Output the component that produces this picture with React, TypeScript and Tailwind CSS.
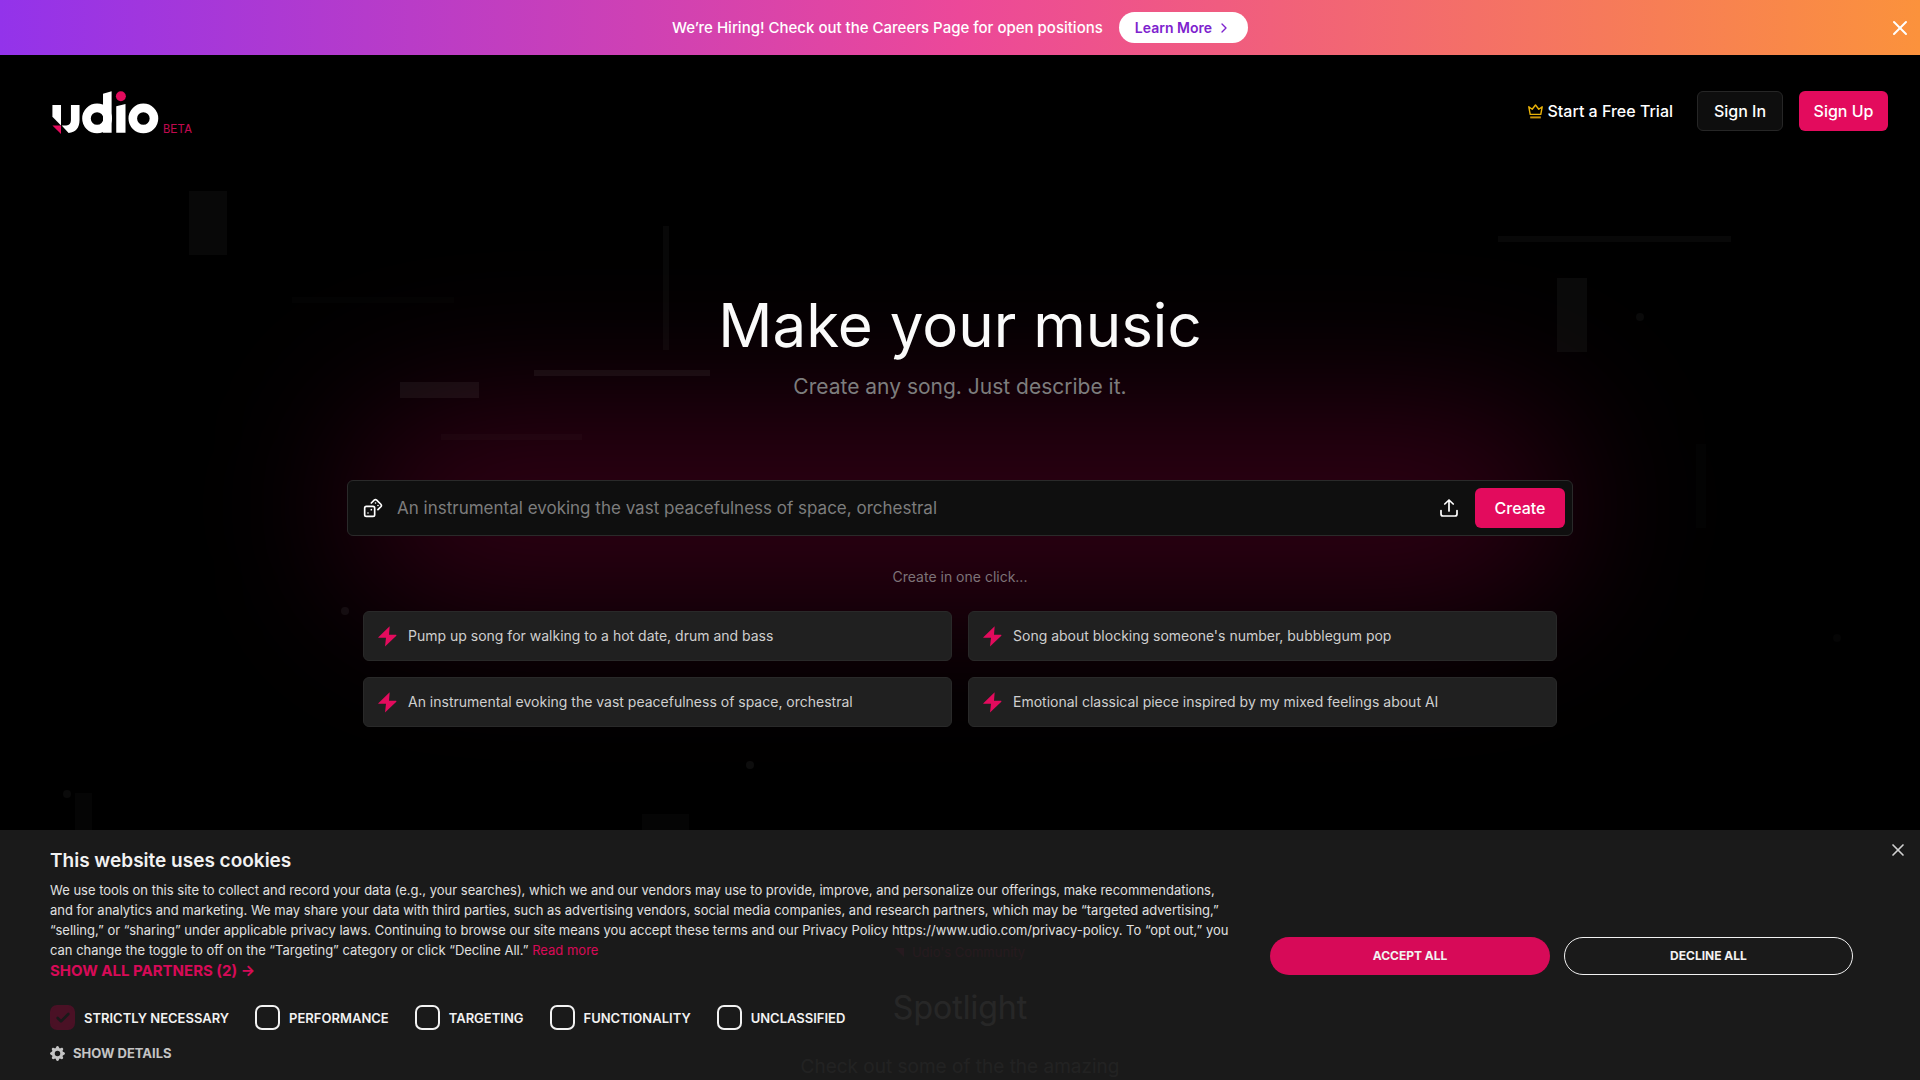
import React, { useState } from 'react';
import { Check, ChevronRight, Dices, X } from 'lucide-react';
import { BsGearFill } from 'react-icons/bs';

const prompts = [
  'Pump up song for walking to a hot date, drum and bass',
  "Song about blocking someone's number, bubblegum pop",
  'An instrumental evoking the vast peacefulness of space, orchestral',
  'Emotional classical piece inspired by my mixed feelings about AI',
];

const cookieGroups = [
  { id: 'necessary', label: 'STRICTLY NECESSARY', locked: true },
  { id: 'performance', label: 'PERFORMANCE' },
  { id: 'targeting', label: 'TARGETING' },
  { id: 'functionality', label: 'FUNCTIONALITY' },
  { id: 'unclassified', label: 'UNCLASSIFIED' },
];

// Faint blocks floating behind the hero
const shapes = [
  'left-[189px] top-[191px] h-16 w-[38px] bg-white/3',
  'left-[292px] top-[297px] h-[6px] w-[162px] bg-white/1',
  'left-[663px] top-[226px] h-[124px] w-[6px] bg-white/3',
  'left-[534px] top-[370px] h-[6px] w-[176px] bg-white/5',
  'left-[400px] top-[382px] h-4 w-[79px] bg-white/5',
  'left-[441px] top-[434px] h-[6px] w-[141px] bg-white/2',
  'left-[1498px] top-[236px] h-[6px] w-[233px] bg-white/3',
  'left-[1557px] top-[278px] h-[74px] w-[30px] bg-white/4',
  'left-[1696px] top-[444px] h-[84px] w-[10px] bg-white/1',
  'left-[75px] top-[793px] h-[80px] w-[17px] bg-white/2',
  'left-[642px] top-[814px] h-[40px] w-[47px] bg-white/2',
  'left-[341px] top-[607px] size-2 rounded-full bg-white/5',
  'left-[746px] top-[761px] size-2 rounded-full bg-white/5',
  'left-[1636px] top-[313px] size-2 rounded-full bg-white/4',
  'left-[1833px] top-[634px] size-2 rounded-full bg-white/2',
  'left-[63px] top-[790px] size-2 rounded-full bg-white/4',
];

const Logo: React.FC = () => (
  <a href="#" className="flex items-end gap-1" aria-label="Udio">
    <svg viewBox="156 272 321 130" className="h-[43px] w-[107px]" aria-hidden="true">
      <g fill="#fff">
        <path d="M156 314H182V376L156 350Z" />
        <path d="M212 314H238V360C238 384 226 398 205 399L184 376H198C207 376 212 370 212 360Z" />
        <path d="M309 280L335 273V398H309Z" />
        <path d="M349 318L377 311V398H349Z" />
      </g>
      <g fill="none" stroke="#fff" strokeWidth="26">
        <circle cx="291" cy="355" r="32" />
        <circle cx="431" cy="355" r="32" />
      </g>
      <path d="M156 376H182V402Z" fill="#e30b5d" />
      <circle cx="363" cy="288" r="15" fill="#e30b5d" />
    </svg>
    <span className="font-['Liberation_Mono',monospace] text-xs leading-2 text-[#c00a4f]">BETA</span>
  </a>
);

const CrownIcon: React.FC = () => (
  <svg viewBox="0 0 15 15" className="size-[15px]" fill="none" aria-hidden="true">
    <path
      d="M0.8 2.8L4.2 5.2L7.5 1L10.8 5.2L14.2 2.8L12.8 10.4H2.2Z"
      stroke="#eab308"
      strokeWidth="1.4"
      strokeLinejoin="round"
    />
    <path d="M2.2 12.4H12.8V14.4H2.2Z" fill="#c8930a" />
  </svg>
);

const BoltIcon: React.FC = () => (
  <svg viewBox="0 0 57 62" className="h-[21px] w-[19px] shrink-0" fill="#e30b5d" aria-hidden="true">
    <path d="M35 0L1 33Q0 35 2 35H24L21 61L55 29Q56 26 54 26H33Z" />
  </svg>
);

const UploadIcon: React.FC = () => (
  <svg
    viewBox="0 0 18 18"
    className="size-[18px]"
    fill="none"
    stroke="#fff"
    strokeWidth="1.7"
    strokeLinecap="round"
    strokeLinejoin="round"
    aria-hidden="true"
  >
    <path d="M9 12V1.2M4.8 5L9 1L13.2 5" />
    <path d="M1 11.5V15Q1 17 3 17H15Q17 17 17 15V11.5" />
  </svg>
);

const HiringBanner: React.FC<{ onClose: () => void }> = ({ onClose }) => (
  <div className="relative flex h-[55px] items-center justify-center gap-4 bg-linear-to-r/srgb from-[#9333ea] via-[#ec4899] to-[#fb923c]">
    <p className="text-[15px] leading-5 font-medium">We’re Hiring! Check out the Careers Page for open positions</p>
    <a
      href="#"
      className="flex h-[31px] items-center gap-1 rounded-full bg-white px-4 text-sm font-semibold text-[#7e22ce]"
    >
      Learn More
      <ChevronRight className="size-4" />
    </a>
    <button type="button" aria-label="Dismiss" onClick={onClose} className="absolute right-2 p-0">
      <X className="size-6" />
    </button>
  </div>
);

const Header: React.FC = () => (
  <header className="flex items-start justify-between pt-9 pr-8 pl-[52px]">
    <Logo />
    <nav className="flex items-center text-base font-medium">
      <a href="#" className="mr-6 flex items-center gap-1">
        <CrownIcon />
        Start a Free Trial
      </a>
      <button type="button" className="mr-4 h-10 w-[86px] rounded-md border border-[#262626] bg-[#0e0e0e]">
        Sign In
      </button>
      <button type="button" className="h-10 w-[89px] rounded-md bg-[#e30b5d]">
        Sign Up
      </button>
    </nav>
  </header>
);

const Hero: React.FC = () => (
  <section className="flex flex-col items-center px-8 pt-[161px] text-center">
    <h1 className="text-[60px] leading-[60px] text-[#fafafa]">Make your music</h1>
    <p className="mt-[18px] text-[21px] leading-7 text-[#7d7d7d]">Create any song. Just describe it.</p>

    <div className="relative mt-[79px] w-full max-w-[1226px]">
      <div className="absolute inset-x-0 -top-[72px] -bottom-[68px] -z-10 rounded-full bg-[#300014] blur-[76px]" />
      <form
        className="relative flex h-14 items-center rounded-md border border-[#2a2a2a] bg-[#0f0f0f] pr-[7px] pl-[15px]"
        onSubmit={(e) => e.preventDefault()}
      >
        <button type="button" aria-label="Random prompt">
          <Dices className="size-5" />
        </button>
        <input
          type="text"
          aria-label="Prompt"
          placeholder="An instrumental evoking the vast peacefulness of space, orchestral"
          className="ml-[14px] min-w-0 flex-1 bg-transparent pt-0.5 text-[17px] outline-none placeholder:text-[#7d7d7d]"
        />
        <button type="button" aria-label="Upload audio" className="mr-[17px]">
          <UploadIcon />
        </button>
        <button type="submit" className="h-10 w-[90px] rounded-md bg-[#e30b5d] text-base font-medium">
          Create
        </button>
      </form>
    </div>

    <p className="mt-[31px] text-sm leading-5 text-[#7d7378]">Create in one click...</p>

    <div className="mt-6 grid w-full max-w-[1194px] grid-cols-2 gap-4">
      {prompts.map((prompt) => (
        <button
          key={prompt}
          type="button"
          className="flex h-[50px] items-center gap-[11px] rounded-md border border-[#292929] bg-[#202020] px-[14px] text-left text-sm text-[#cfcfcf]"
        >
          <BoltIcon />
          {prompt}
        </button>
      ))}
    </div>
  </section>
);

const Spotlight: React.FC = () => (
  <section className="flex flex-col items-center pt-[215px]">
    <p className="flex items-center gap-2 text-[13px] leading-5 text-[#e30b5d]">
      <svg viewBox="0 0 9 9" className="size-[9px]" fill="#e30b5d" aria-hidden="true">
        <path d="M0 0H9V9Z" />
      </svg>
      Udio's Community
    </p>
    <h2 className="mt-7 text-[32px] leading-9">Spotlight</h2>
    <p className="mt-[29px] text-[19px] leading-6 text-[#a3a3a3]">Check out some of the the amazing</p>
  </section>
);

const CookieBar: React.FC<{ onClose: () => void }> = ({ onClose }) => {
  const [enabled, setEnabled] = useState<string[]>(['necessary']);

  const toggle = (id: string) => {
    setEnabled((prev) => (prev.includes(id) ? prev.filter((g) => g !== id) : [...prev, id]));
  };

  return (
    <div
      role="dialog"
      aria-labelledby="cookie-title"
      className="fixed inset-x-0 bottom-0 flex items-center bg-[#1c1c1c] pt-[19px] pr-[67px] pb-[17px] pl-[50px] opacity-95"
    >
      <div className="min-w-0 flex-1">
        <h2 id="cookie-title" className="text-[19px] leading-6 font-semibold">
          This website uses cookies
        </h2>
        <p className="mt-[7px] text-[13px] leading-5 text-[#ededed]">
          We use tools on this site to collect and record your data (e.g., your searches), which we and our vendors may
          use to provide, improve, and personalize our offerings, make recommendations,
          <br />
          and for analytics and marketing. We may share your data with third parties, such as advertising vendors,
          social media companies, and research partners, which may be “targeted advertising,”
          <br />
          “selling,” or “sharing” under applicable privacy laws. Continuing to browse our site means you accept these
          terms and our Privacy Policy https://www.udio.com/privacy-policy. To “opt out,” you
          <br />
          can change the toggle to off on the “Targeting” category or click “Decline All.”{' '}
          <a href="#" className="text-[#e30b5d]">
            Read more
          </a>
        </p>
        <a href="#" className="mt-px block w-fit text-[15px] leading-5 font-bold text-[#e30b5d]">
          SHOW ALL PARTNERS (2) →
        </a>

        <div className="mt-6 flex items-center gap-[26px]">
          {cookieGroups.map(({ id, label, locked }) => (
            <label key={id} htmlFor={id} className="flex items-center gap-[9px] text-[13px] leading-5 font-semibold">
              <span className="relative flex size-[25px] items-center justify-center">
                <input
                  id={id}
                  type="checkbox"
                  checked={enabled.includes(id)}
                  disabled={locked}
                  onChange={() => toggle(id)}
                  className="size-full appearance-none rounded-[7px] border-2 border-white checked:border-[#e30b5d] checked:bg-[#e30b5d] disabled:border-[#4e1228] disabled:bg-[#4e1228]"
                />
                {enabled.includes(id) && (
                  <Check className="pointer-events-none absolute size-4 text-[#1c1c1c]" strokeWidth={4} />
                )}
              </span>
              {label}
            </label>
          ))}
        </div>

        <button
          type="button"
          className="mt-[13px] flex items-center gap-2 text-[13px] leading-5 font-bold text-[#cfcfcf]"
        >
          <BsGearFill className="size-[15px]" />
          SHOW DETAILS
        </button>
      </div>

      <div className="flex shrink-0 gap-[14px] text-xs font-bold">
        <button type="button" onClick={onClose} className="h-[38px] w-[280px] rounded-full bg-[#e30b5d]">
          ACCEPT ALL
        </button>
        <button type="button" onClick={onClose} className="h-[38px] w-[289px] rounded-full border border-white">
          DECLINE ALL
        </button>
      </div>

      <button type="button" aria-label="Close" onClick={onClose} className="absolute top-[10px] right-3">
        <X className="size-5 text-[#dcdcdc]" />
      </button>
    </div>
  );
};

export default function App() {
  const [showBanner, setShowBanner] = useState(true);
  const [showCookies, setShowCookies] = useState(true);

  return (
    <div className="relative isolate min-h-screen overflow-hidden bg-black font-[Inter,sans-serif] text-white">
      <div aria-hidden="true">
        {shapes.map((shape) => (
          <div key={shape} className={`absolute ${shape}`} />
        ))}
      </div>
      {showBanner && <HiringBanner onClose={() => setShowBanner(false)} />}
      <div className="relative">
        <Header />
        <Hero />
        <Spotlight />
      </div>
      {showCookies && <CookieBar onClose={() => setShowCookies(false)} />}
    </div>
  );
}
